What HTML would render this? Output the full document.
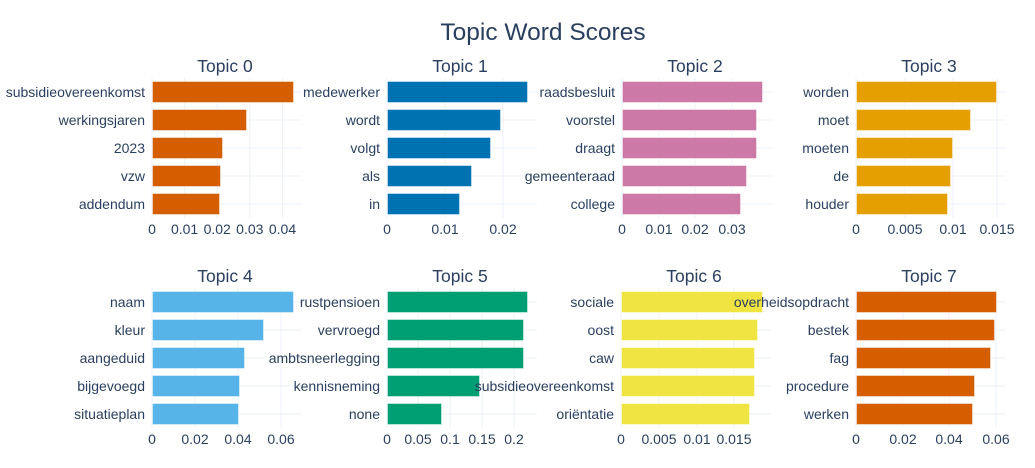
<!DOCTYPE html>
<html><head><meta charset="utf-8"><style>
html,body{margin:0;padding:0;background:#fff;}
svg{display:block;font-family:"Liberation Sans","DejaVu Sans",sans-serif;}
.t{fill:#2a3f5f;font-size:14px;}
.st{fill:#2a3f5f;font-size:17.5px;text-anchor:middle;}
.g{stroke:#ebf0f8;stroke-width:1;}
</style></head><body>
<svg width="1035" height="468" viewBox="0 0 1035 468">
<text x="543" y="40" style="fill:#2a3f5f;font-size:24.5px;text-anchor:middle">Topic Word Scores</text>
<g id="c"></g>
</svg>
<script>
const P=[
 {x0:152,x1:302,y0:78,t:"Topic 0",c:"#D55E00",ticks:[[152,"0"],[184.6,"0.01"],[217.2,"0.02"],[249.8,"0.03"],[282.5,"0.04"]],w:["subsidieovereenkomst","werkingsjaren","2023","vzw","addendum"],b:[294,247,223,221,220]},
 {x0:387,x1:537,y0:78,t:"Topic 1",c:"#0072B2",ticks:[[387,"0"],[445,"0.01"],[503,"0.02"]],w:["medewerker","wordt","volgt","als","in"],b:[528,501,491,472,460]},
 {x0:622,x1:772,y0:78,t:"Topic 2",c:"#CC79A7",ticks:[[622,"0"],[659,"0.01"],[695,"0.02"],[732,"0.03"]],w:["raadsbesluit","voorstel","draagt","gemeenteraad","college"],b:[763,757,757,747,741]},
 {x0:856,x1:1006,y0:78,t:"Topic 3",c:"#E69F00",ticks:[[856,"0"],[905,"0.005"],[953,"0.01"],[997,"0.015"]],w:["worden","moet","moeten","de","houder"],b:[997,971,953,951,948]},
 {x0:152,x1:302,y0:288,t:"Topic 4",c:"#56B4E9",ticks:[[152,"0"],[195,"0.02"],[238,"0.04"],[281,"0.06"]],w:["naam","kleur","aangeduid","bijgevoegd","situatieplan"],b:[294,264,245,240,239]},
 {x0:387,x1:537,y0:288,t:"Topic 5",c:"#009E73",ticks:[[387,"0"],[418,"0.05"],[450,"0.1"],[482,"0.15"],[514,"0.2"]],w:["rustpensioen","vervroegd","ambtsneerlegging","kennisneming","none"],b:[528,524,524,480,442]},
 {x0:621,x1:771,y0:288,t:"Topic 6",c:"#F0E442",ticks:[[621,"0"],[659,"0.005"],[697,"0.01"],[734,"0.015"]],w:["sociale","oost","caw","subsidieovereenkomst","oriëntatie"],b:[763,758,755,755,750]},
 {x0:856,x1:1006,y0:288,t:"Topic 7",c:"#D55E00",ticks:[[856,"0"],[903,"0.02"],[949,"0.04"],[996,"0.06"]],w:["overheidsopdracht","bestek","fag","procedure","werken"],b:[997,995,991,975,973]}
];
let s="";
for(const p of P){
 const yb=p.y0+140;
 for(const [x] of p.ticks) s+=`<line class="g" x1="${x}" x2="${x}" y1="${p.y0}" y2="${yb}"/>`;
 for(let i=0;i<5;i++){const cy=p.y0+14+28*i;s+=`<line class="g" x1="${p.x0}" x2="${p.x1}" y1="${cy}" y2="${cy}"/>`;}
 s+=`<text class="st" x="${(p.x0+p.x1)/2-2}" y="${p.y0-6}">${p.t}</text>`;
}
for(const p of P){
 for(let i=0;i<5;i++){const cy=p.y0+14+28*i;
  s+=`<rect x="${p.x0+0.5}" y="${cy-10.5}" width="${p.b[i]-p.x0-1}" height="21" fill="${p.c}" stroke="rgba(255,255,255,0.45)" stroke-width="1"/>`;}
}
for(const p of P){
 const yb=p.y0+140;
 for(let i=0;i<5;i++){const cy=p.y0+14+28*i;
  s+=`<text class="t" x="${p.x0-7}" y="${cy+5}" text-anchor="end">${p.w[i]}</text>`;}
 for(const [x,l] of p.ticks) s+=`<text class="t" x="${x}" y="${yb+16}" text-anchor="middle">${l}</text>`;
}
document.getElementById("c").innerHTML=s;
</script>
</body></html>
